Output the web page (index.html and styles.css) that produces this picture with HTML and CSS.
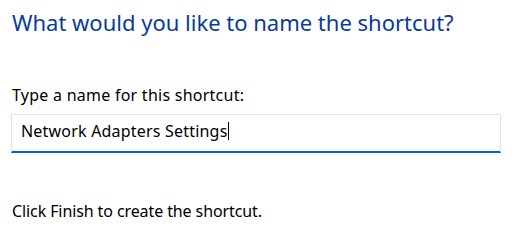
FILE: index.html
```html
<!DOCTYPE html>
<html lang="en">
<head>
	<meta charset="UTF-8">
	<title>Create Shortcut</title>
	<link rel="stylesheet" href="styles.css">
</head>
<body>
	<main class="wizard">
		<h1 class="wizard-title">What would you like to name the shortcut?</h1>
		<label class="field-label" for="name">Type a name for this shortcut:</label>
		<div class="field" id="name">
			<span class="field-text">Network Adapters Settings</span><span class="caret"></span>
		</div>
		<p class="hint">Click Finish to create the shortcut.</p>
	</main>
</body>
</html>
```
FILE: styles.css
```css
html{
	box-sizing: border-box;
	font-family: "Noto Sans", "Open Sans", sans-serif;
	font-size: 16px;
}
*,
*:before,
*:after{
	box-sizing: inherit;
}

body{
	margin: 0;
	background-color: #fff;
	color: #000;
}

.wizard{
	display: flex;
	flex-direction: column;
	align-items: flex-start;
	padding: 7px 20px 0 11px;
}

.wizard-title{
	margin: 0 0 47px 1px;
	font-size: 22px;
	line-height: 30px;
	font-weight: normal;
	color: #0a3a9c;
}

.field-label{
	margin-left: 1px;
	line-height: 22px;
	letter-spacing: .25px;
}

.field{
	display: flex;
	align-items: center;
	width: 100%;
	height: 39px;
	margin-top: 8px;
	padding: 0 9px 4px;
	border: 1px solid #e3e3e3;
	border-right-color: #dde6f0;
	border-bottom: 2px solid #0067c0;
	line-height: 22px;
}

.field-text{
	letter-spacing: .2px;
}

.caret{
	width: 1px;
	height: 18px;
	background-color: #000;
}

.hint{
	margin: 47px 0 0 1px;
	line-height: 22px;
	letter-spacing: -.1px;
}
```
